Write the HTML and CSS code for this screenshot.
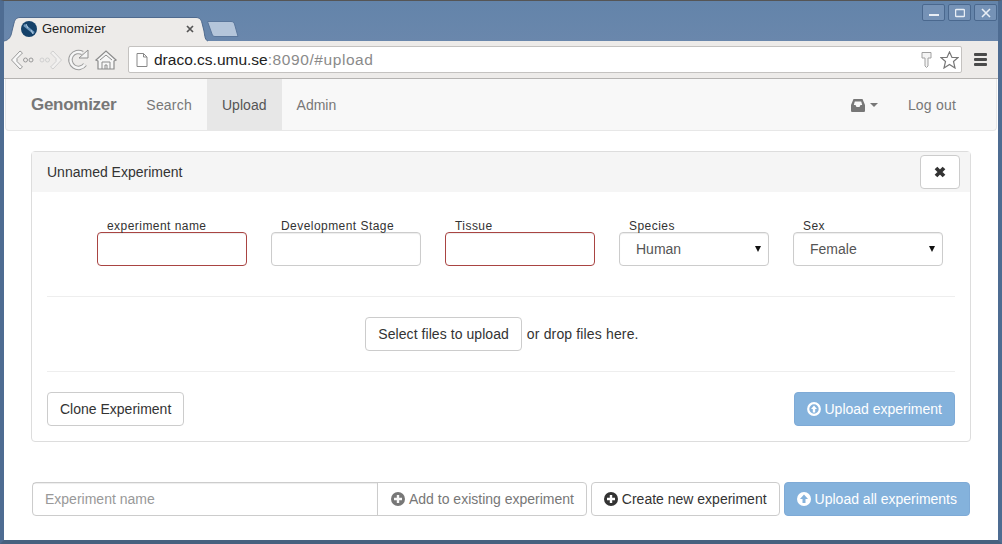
FILE: index.html
```html
<!DOCTYPE html>
<html>

<head>
	<meta charset="utf-8">
	<title>Genomizer</title>
	<link rel="stylesheet" href="styles.css">
</head>

<body>
	<div class="window">
		<div class="titlebar">
			<div class="tab">
				<svg class="tab-shape" width="204" height="25" viewBox="0 0 204 25"><path d="M0 24C5 23 7 20 8 14L10 6C11 2 13 .5 16 .5H192C195 .5 197 2 198 6L200 14C201 20 201 23 204 24V25H0Z" fill="#edebe9"/><path d="M0 24C5 23 7 20 8 14L10 6C11 2 13 .5 16 .5H192C195 .5 197 2 198 6L200 14C201 20 201 23 204 24" fill="none" stroke="#4f6a8e"/></svg>
				<svg class="favicon" width="16" height="16" viewBox="0 0 16 16"><circle cx="8" cy="8" r="8" fill="#15426a"/><path d="M3 4L13 12" stroke="#6f9ac0" stroke-width="2.500"/><path d="M5 3L7 7M10 9L12 13" stroke="#b5cde0" stroke-width="1"/></svg>
				<span class="tab-title">Genomizer</span>
				<svg class="tab-close" width="8" height="8" viewBox="0 0 8 8"><path d="M1 1L7 7M7 1L1 7" stroke="#555" stroke-width="1.700"/></svg>
			</div>
			<svg class="new-tab" width="32" height="16" viewBox="0 0 32 16"><path d="M.5 .5H24C26 .5 27 1.500 27.500 3L31 15.500H8C6 15.500 5.500 14.500 5 13Z" fill="#b4c5da" stroke="#5a769b"/></svg>
			<div class="win-buttons">
				<div class="win-btn"><svg width="10" height="10" viewBox="0 0 10 10"><path d="M0 7H10" stroke="#e8eef5" stroke-width="2"/></svg></div>
				<div class="win-btn"><svg width="10" height="10" viewBox="0 0 10 10"><rect x=".5" y="1.500" width="9" height="7" rx="1" fill="none" stroke="#e8eef5" stroke-width="1.500"/></svg></div>
				<div class="win-btn"><svg width="10" height="10" viewBox="0 0 10 10"><path d="M1 1L9 9M9 1L1 9" stroke="#e8eef5" stroke-width="1.600"/></svg></div>
			</div>
		</div>
		<div class="toolbar">
			<svg class="tool" width="24" height="22" viewBox="0 0 24 22"><path d="M10 2L1.500 11L10 20L12.500 18L7 12.500V9.500L12.500 4Z" fill="#f8f8f8" stroke="#9a9a9a"/><circle cx="15.500" cy="11" r="2" fill="none" stroke="#999"/><circle cx="21" cy="11" r="2" fill="none" stroke="#999"/></svg>
			<svg class="tool" width="24" height="22" viewBox="0 0 24 22"><path d="M14 2L22.500 11L14 20L11.500 18L17 12.500V9.500L11.500 4Z" fill="#f2f1f0" stroke="#d0d0d0"/><circle cx="3" cy="11" r="2" fill="none" stroke="#d0d0d0"/><circle cx="8.500" cy="11" r="2" fill="none" stroke="#d0d0d0"/></svg>
			<svg class="tool" width="22" height="22" viewBox="0 0 22 22"><path d="M17 15.500A8 8 0 1 1 14.500 4" fill="none" stroke="#9c9c9c" stroke-width="4.500"/><path d="M17 15.500A8 8 0 1 1 14.500 4" fill="none" stroke="#f6f6f6" stroke-width="2.500"/><path d="M11 9H20V1Z" fill="#f4f4f4" stroke="#909090"/></svg>
			<svg class="tool" width="22" height="22" viewBox="0 0 22 22"><path d="M1 11L11 2L21 11L19 12V20H3V12Z" fill="#f6f6f6" stroke="#8c8c8c" stroke-width="1.200"/><path d="M5 11L11 6L17 11M7 20V13H15V20M10 20V16H12V20" fill="none" stroke="#8c8c8c"/></svg>
			<div class="omnibox">
				<svg class="page-icon" width="12" height="14" viewBox="0 0 12 14"><path d="M1 .5H7.500L11 4V13.500H1ZM7.500 .5V4H11" fill="#fff" stroke="#888"/></svg>
				<span class="url"><span class="url-host">draco.cs.umu.se</span>:8090/#upload</span>
				<svg class="key" width="11" height="16" viewBox="0 0 11 16"><path d="M1 .5H10V6H7V14L5.500 15.500L4 14V6H1Z" fill="#f4f4f4" stroke="#a0a0a0"/></svg>
				<svg class="star" width="19" height="18" viewBox="0 0 19 18"><path d="M9.500 1L12 6.500H18L13.500 10.500L15 17L9.500 13.500L4 17L5.500 10.500L1 6.500H7Z" fill="#fff" stroke="#777" stroke-width="1.200"/></svg>
			</div>
			<div class="menu-icon"><i></i><i></i><i></i></div>
		</div>

		<div class="page">
			<nav class="navbar">
				<a class="brand">Genomizer</a>
				<a class="nav-link">Search</a>
				<a class="nav-link active">Upload</a>
				<a class="nav-link admin">Admin</a>
				<div class="nav-right">
					<a class="nav-inbox">
						<svg width="14" height="13" viewBox="0 0 14 13"><path d="M2.500 0H11.500L14 6V11.500C14 12.500 13.500 13 12.500 13H1.500C.5 13 0 12.500 0 11.500V6ZM3.800 2.500L2.800 6H4.500L5.500 8H8.500L9.500 6H11.200L10.200 2.500Z" fill="#777" fill-rule="evenodd"/></svg>
						<span class="caret"></span>
					</a>
					<a class="nav-link">Log out</a>
				</div>
			</nav>

			<div class="panel">
				<div class="panel-heading">
					<span>Unnamed Experiment</span>
					<button class="btn btn-close"><svg width="14" height="14" viewBox="0 0 14 14"><path d="M3 3L11 11M11 3L3 11" stroke="#333" stroke-width="3.800"/></svg></button>
				</div>
				<div class="panel-body">
					<div class="fields">
						<div class="field"><label>experiment name</label><div class="control invalid"></div></div>
						<div class="field"><label>Development Stage</label><div class="control"></div></div>
						<div class="field"><label>Tissue</label><div class="control invalid"></div></div>
						<div class="field"><label>Species</label><div class="control select">Human<span class="arrow"></span></div></div>
						<div class="field"><label>Sex</label><div class="control select">Female<span class="arrow"></span></div></div>
					</div>
					<div class="files">
						<button class="btn">Select files to upload</button>
						<span>or drop files here.</span>
					</div>
					<div class="actions">
						<button class="btn">Clone Experiment</button>
						<button class="btn btn-primary">
							<svg class="glyph" width="14" height="14" viewBox="0 0 14 14"><circle cx="7" cy="7" r="5.800" fill="none" stroke="#fff" stroke-width="2.200"/><path d="M7 3.500L10 7H8.200V10.500H5.800V7H4Z" fill="#fff"/></svg>
							Upload experiment
						</button>
					</div>
				</div>
			</div>

			<div class="bottom-bar">
				<div class="input-group">
					<div class="name-input">Experiment name</div>
					<div class="addon">
						<svg class="glyph" width="14" height="14" viewBox="0 0 14 14"><circle cx="7" cy="7" r="7" fill="#777"/><path d="M7 3V11M3 7H11" stroke="#f8f8f8" stroke-width="2.400"/></svg>
						Add to existing experiment
					</div>
				</div>
				<button class="btn">
					<svg class="glyph" width="14" height="14" viewBox="0 0 14 14"><circle cx="7" cy="7" r="7" fill="#333"/><path d="M7 3V11M3 7H11" stroke="#fff" stroke-width="2.400"/></svg>
					Create new experiment
				</button>
				<button class="btn btn-primary">
					<svg class="glyph" width="14" height="14" viewBox="0 0 14 14"><circle cx="7" cy="7" r="7" fill="#fff"/><path d="M7 2.500L11 7H8.500V11H5.500V7H3Z" fill="#84b2dc"/></svg>
					Upload all experiments
				</button>
			</div>
		</div>
	</div>
</body>

</html>
```

FILE: styles.css
```css
* {
	box-sizing: border-box;
}

html, body {
	margin: 0;
	padding: 0;
	height: 100%;
}

body {
	font-family: "Liberation Sans", Arial, sans-serif;
	font-size: 14px;
	color: #333;
	overflow: hidden;
}

.window {
	width: 1002px;
	height: 544px;
	display: flex;
	flex-direction: column;
	border: solid #4e6c92;
	border-width: 1px 4px 4px 4px;
	border-top-color: #555;
	border-bottom-color: #46617f;
	background: #6a87ac;
}

/* Browser chrome */

.titlebar {
	height: 40px;
	flex: none;
	display: flex;
	align-items: flex-end;
	background: linear-gradient(#6384aa, #6a87ac);
}

.tab {
	position: relative;
	width: 204px;
	height: 25px;
	display: flex;
	align-items: center;
	padding: 0 14px 2px 17px;
	margin-bottom: -1px;
	font-size: 13px;
	color: #222;
}

.tab-shape {
	position: absolute;
	left: 0;
	top: 0;
}

.favicon, .tab-title, .tab-close {
	position: relative;
}

.tab-title {
	margin-left: 5px;
	flex: 1;
}

.new-tab {
	margin: 0 0 4px -1px;
}

.win-buttons {
	display: flex;
	gap: 3px;
	margin-left: auto;
	align-self: flex-start;
	margin-top: 3px;
	padding-right: 1px;
}

.win-btn {
	width: 23px;
	height: 17px;
	display: flex;
	align-items: center;
	justify-content: center;
	border: 1px solid #4a688e;
	border-radius: 2px;
	background: #7592b6;
}

.toolbar {
	height: 38px;
	flex: none;
	display: flex;
	align-items: center;
	padding-left: 6px;
	background: #edebe9;
	border-bottom: 1px solid #b5b3b1;
}

.tool {
	margin-right: 5px;
	flex: none;
}

.omnibox {
	width: 834px;
	height: 27px;
	margin-left: 6px;
	display: flex;
	align-items: center;
	padding: 0 2px 0 7px;
	background: #fff;
	border: 1px solid #c4c2c0;
	border-radius: 2px;
}

.url {
	margin-left: 6px;
	flex: 1;
	font-size: 15.500px;
	letter-spacing: .58px;
	color: #8a8a8a;
}

.url-host {
	color: #222;
	letter-spacing: 0;
}

.star {
	margin-left: 8px;
}

.menu-icon {
	margin-left: 12px;
	width: 13px;
	display: flex;
	flex-direction: column;
	gap: 2px;
}

.menu-icon i {
	height: 3px;
	background: #4a4a4a;
	border-radius: 1px;
}

/* Page */

.page {
	flex: 1;
	background: #fff;
	padding: 0 1px;
	display: flex;
	flex-direction: column;
}

.navbar {
	height: 52px;
	flex: none;
	display: flex;
	align-items: stretch;
	background: #f8f8f8;
	border: 1px solid #e7e7e7;
	border-top: 0;
	border-radius: 0 0 4px 4px;
	color: #777;
}

.brand, .nav-link, .nav-inbox {
	display: flex;
	align-items: center;
	padding-top: 1px;
}

.brand {
	font-size: 17px;
	font-weight: bold;
	letter-spacing: -.28px;
	padding: 1px 15px 0 25px;
}

.nav-link {
	padding: 1px 15px 0;
	letter-spacing: .2px;
}

.nav-link.active {
	background: #e7e7e7;
	color: #555;
	letter-spacing: .05px;
}

.nav-link.admin {
	letter-spacing: 0;
}

.nav-right {
	margin-left: auto;
	display: flex;
	padding-right: 25px;
}

.nav-inbox {
	padding-right: 15px;
}

.caret {
	margin-left: 5px;
	border: 4px solid transparent;
	border-top-color: #777;
	border-bottom: 0;
}

.panel {
	margin: 20px 26px 0 26px;
	height: 291px;
	flex: none;
	border: 1px solid #ddd;
	border-radius: 4px;
	display: flex;
	flex-direction: column;
}

.panel-heading {
	height: 40px;
	flex: none;
	display: flex;
	align-items: center;
	justify-content: space-between;
	padding: 0 10px 0 15px;
	background: #f5f5f5;
}

.btn {
	height: 34px;
	padding: 0 12px;
	display: inline-flex;
	align-items: center;
	font-family: inherit;
	font-size: 14px;
	white-space: nowrap;
	color: #333;
	background: #fff;
	border: 1px solid #ccc;
	border-radius: 4px;
}

.btn-close {
	width: 40px;
	justify-content: center;
	padding: 0;
}

.btn-primary {
	color: #fff;
	background: #84b2dc;
	border-color: #7eaad6;
}

.glyph {
	margin-right: 4px;
	flex: none;
}

.panel-body {
	flex: 1;
	padding: 0 15px;
	display: flex;
	flex-direction: column;
}

.fields {
	height: 105px;
	flex: none;
	display: flex;
	gap: 24px;
	padding: 27px 0 0 50px;
	border-bottom: 1px solid #eee;
}

.field label {
	display: block;
	height: 13px;
	padding-left: 10px;
	font-size: 12px;
	line-height: 14px;
	letter-spacing: .45px;
}

.control {
	width: 150px;
	height: 34px;
	background: #fff;
	border: 1px solid #ccc;
	border-radius: 4px;
	box-shadow: inset 0 1px 1px rgba(0, 0, 0, .075);
}

.control.invalid {
	border-color: #a94442;
}

.select {
	display: flex;
	align-items: center;
	justify-content: space-between;
	padding: 0 7px 0 16px;
	color: #555;
}

.arrow {
	border: 3.500px solid transparent;
	border-top: 6px solid #111;
	border-bottom: 0;
}

.files {
	height: 75px;
	flex: none;
	display: flex;
	align-items: center;
	justify-content: center;
	gap: 5px;
	padding-left: 2px;
	border-bottom: 1px solid #eee;
}

.files .btn {
	letter-spacing: .06px;
}

.files span {
	letter-spacing: .15px;
}

.actions {
	flex: 1;
	display: flex;
	align-items: flex-start;
	justify-content: space-between;
	padding-top: 20px;
}

.actions .glyph {
	margin-right: 3px;
}

.bottom-bar {
	margin: 40px 27px 0 27px;
	display: flex;
	gap: 4px;
}

.input-group {
	flex: 1;
	height: 34px;
	display: flex;
	border: 1px solid #ccc;
	border-radius: 4px;
}

.name-input {
	width: 344px;
	display: flex;
	align-items: center;
	padding-left: 12px;
	color: #999;
	box-shadow: inset 0 1px 1px rgba(0, 0, 0, .075);
}

.addon {
	flex: 1;
	display: flex;
	align-items: center;
	padding-left: 13px;
	white-space: nowrap;
	color: #777;
	border-left: 1px solid #ccc;
}
```
